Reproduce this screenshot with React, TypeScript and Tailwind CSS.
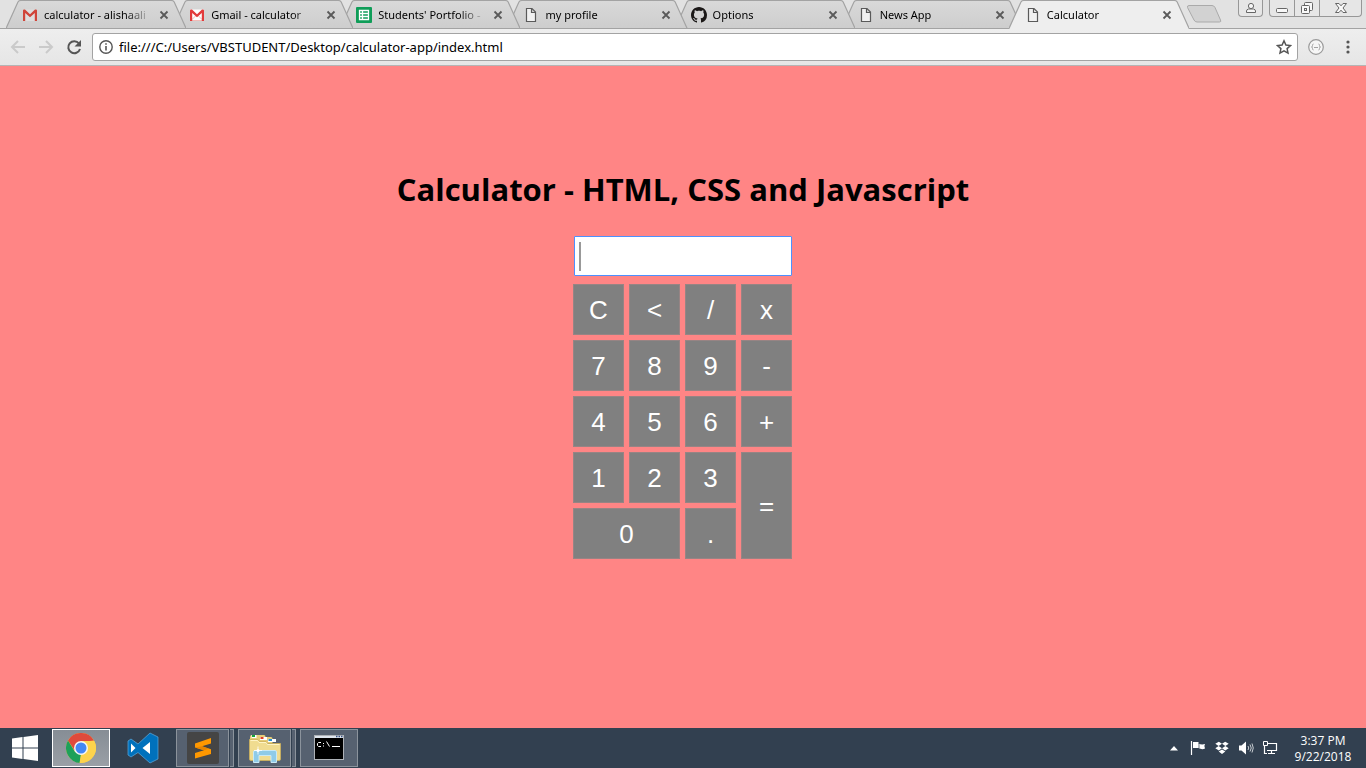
import { useState } from 'react';
import type { ReactNode } from 'react';

function GmailIcon({ soft = false }: { soft?: boolean }) {
  return (
    <svg width="16" height="16" viewBox="0 0 16 16">
      <rect x="1" y="2.500" width="14" height="11.500" fill={soft ? '#dedede' : '#fff'} />
      {!soft && <path d="M3 13.500h10M3 12.500l4-4M13 12.500l-4-4" fill="none" stroke="#eda9a4" strokeWidth=".8" />}
      <path d="M1 14V3.500q0-1 1-1h1L8 7.200l5-4.700h1q1 0 1 1V14h-2.200V6L8 10.300 3.200 6v8z" fill={soft ? '#d0453a' : '#e23b3b'} />
    </svg>
  );
}

function SheetIcon() {
  return (
    <svg width="16" height="16" viewBox="0 0 16 16">
      <rect width="16" height="16" rx="1" fill="#0f9d58" />
      <path d="M3.500 3.500h9v9h-9zM3 6.500h10M3 9.500h10M6.500 3v10" fill="none" stroke="#fff" strokeWidth="1.300" />
    </svg>
  );
}

function PageIcon() {
  return (
    <svg width="16" height="16" viewBox="0 0 16 16">
      <path d="M3.500 1.500H9L12.500 5v9.500h-9zM8.500 1.500V5.500h4" fill="#f1f1f1" stroke="#5a5a5a" strokeWidth="1.200" />
    </svg>
  );
}

function GithubIcon() {
  return (
    <svg width="16" height="16" viewBox="0 0 16 16" fill="#1b1817">
      <path d="M8 0C3.580 0 0 3.580 0 8c0 3.540 2.290 6.530 5.470 7.590.4.070.55-.17.55-.38 0-.19-.01-.82-.01-1.490-2.010.37-2.530-.49-2.690-.94-.09-.23-.48-.94-.82-1.130-.28-.15-.68-.52-.01-.53.63-.01 1.080.58 1.230.82.72 1.210 1.870.87 2.330.66.07-.52.28-.87.51-1.070-1.780-.2-3.640-.89-3.640-3.950 0-.87.31-1.590.82-2.150-.08-.2-.36-1.020.08-2.120 0 0 .67-.21 2.200.82.64-.18 1.320-.27 2-.27s1.360.09 2 .27c1.530-1.040 2.200-.82 2.200-.82.44 1.100.16 1.920.08 2.120.51.56.82 1.270.82 2.150 0 3.070-1.870 3.750-3.650 3.950.29.25.54.73.54 1.480 0 1.070-.01 1.930-.01 2.200 0 .21.15.46.55.38A8.010 8.010 0 0 0 16 8c0-4.420-3.580-8-8-8z" />
    </svg>
  );
}

type TabInfo = { title: string; icon: ReactNode; active?: boolean };

const tabs: TabInfo[] = [
  { title: 'calculator - alishaali', icon: <GmailIcon soft /> },
  { title: 'Gmail - calculator', icon: <GmailIcon /> },
  { title: "Students' Portfolio -", icon: <SheetIcon /> },
  { title: 'my profile', icon: <PageIcon /> },
  { title: 'Options', icon: <GithubIcon /> },
  { title: 'News App', icon: <PageIcon /> },
  { title: 'Calculator', icon: <PageIcon />, active: true },
];

const layers = ['z-[6]', 'z-[5]', 'z-[4]', 'z-[3]', 'z-[2]', 'z-[1]', 'z-[7]'];

function Tab({ tab, layer }: { tab: TabInfo; layer: string }) {
  return (
    <div className={`relative flex min-w-0 flex-1 items-center pl-4 pr-px pt-px ${layer}`}>
      <svg
        className="absolute top-0 left-0 h-[29px] w-[calc(100%+13px)]"
        viewBox="0 0 181 29"
        preserveAspectRatio="none"
      >
        <defs>
          <linearGradient id="tabFill" x1="0" y1="0" x2="0" y2="1">
            <stop offset="0" stopColor="#d9d9d9" />
            <stop offset="1" stopColor="#cdcdcd" />
          </linearGradient>
        </defs>
        <path d="M0 29L12 2Q13 .5 15 .5H166Q168 .5 169 2L181 29z" fill={tab.active ? '#eeeeee' : 'url(#tabFill)'} />
        <path
          d={tab.active ? 'M0 28.500L12 2Q13 .5 15 .5H166Q168 .5 169 2L181 28.500' : 'M0 28.500L12 2Q13 .5 15 .5H166Q168 .5 169 2L181 28.500z'}
          fill="none"
          stroke="#a3a3a3"
          strokeWidth="1.200"
        />
      </svg>
      <a href="#" className="relative flex min-w-0 flex-1 items-center gap-1.5 text-black">
        <span className="shrink-0">{tab.icon}</span>
        <span className="min-w-0 flex-1 whitespace-nowrap [mask-image:linear-gradient(to_right,black_75%,transparent)]">
          {tab.title}
        </span>
      </a>
      <button type="button" aria-label={`Close ${tab.title}`} className="relative ml-1 shrink-0">
        <svg width="16" height="16" viewBox="0 0 16 16">
          <path d="M4.500 4.500l7 7M11.500 4.500l-7 7" stroke="#5a5a5a" strokeWidth="1.800" />
        </svg>
      </button>
    </div>
  );
}

function WindowControls() {
  return (
    <div className="flex h-[17px] gap-[6px] pr-1">
      <button type="button" aria-label="Profile" className="flex w-[25px] items-center justify-center rounded-b border border-t-0 border-[#979797] bg-[#e6e6e6]">
        <svg width="12" height="12" viewBox="0 0 12 12" fill="#f6f6f6" stroke="#666" strokeWidth="1">
          <path d="M1.500 10.500V9Q1.500 7.500 3.500 7H8.500Q10.500 7.500 10.500 9v1.500z" />
          <circle cx="6" cy="4" r="2.600" />
        </svg>
      </button>
      <div className="flex w-[93px] rounded-b border border-t-0 border-[#979797] bg-[#e6e6e6]">
        <button type="button" aria-label="Minimize" className="flex w-[25px] items-center justify-center border-r border-[#979797]">
          <svg width="14" height="14" viewBox="0 0 14 14">
            <rect x="1.500" y="7.500" width="11" height="4" rx="1" fill="#f8f8f8" stroke="#666" />
          </svg>
        </button>
        <button type="button" aria-label="Restore" className="flex w-[25px] items-center justify-center border-r border-[#979797]">
          <svg width="14" height="14" viewBox="0 0 14 14" fill="#f8f8f8" stroke="#666">
            <rect x="4.500" y="1.500" width="8" height="8" rx="1" />
            <rect x="1.500" y="4.500" width="8" height="8" rx="1" />
            <rect x="4.500" y="7.500" width="2" height="2" />
          </svg>
        </button>
        <button type="button" aria-label="Close" className="flex flex-1 items-center justify-center">
          <svg width="14" height="12" viewBox="0 0 14 12">
            <path d="M1.500 1.500h3.500L7 3.800 9 1.500h3.500L9 6l3.500 4.500H9L7 8.200 5 10.500H1.500L5 6z" fill="#f8f8f8" stroke="#666" strokeWidth="1" />
          </svg>
        </button>
      </div>
    </div>
  );
}

function Toolbar() {
  return (
    <div className="flex h-[37px] items-center border-b border-[#b5b5b5] bg-gradient-to-b from-[#eeeeee] to-[#e6e6e6] px-[10px]">
      <button type="button" aria-label="Back">
        <svg width="16" height="16" viewBox="0 0 16 16" fill="none" stroke="#cacaca" strokeWidth="2">
          <path d="M15 8H2M8 2L2 8l6 6" />
        </svg>
      </button>
      <button type="button" aria-label="Forward" className="ml-3">
        <svg width="16" height="16" viewBox="0 0 16 16" fill="none" stroke="#cacaca" strokeWidth="2">
          <path d="M1 8h13M8 2l6 6-6 6" />
        </svg>
      </button>
      <button type="button" aria-label="Reload" className="ml-3">
        <svg width="16" height="16" viewBox="0 0 16 16">
          <path d="M13 4.500A6 6 0 1 0 14 10" fill="none" stroke="#555" strokeWidth="2" />
          <path d="M15 1v6.500H8.500z" fill="#555" />
        </svg>
      </button>
      <div className="ml-[10px] flex h-7 flex-1 items-center rounded-[3px] border border-[#a3a3a3] bg-white pl-[6px] pr-[5px]">
        <svg width="14" height="14" viewBox="0 0 14 14">
          <circle cx="7" cy="7" r="6.200" fill="none" stroke="#555" strokeWidth="1.400" />
          <path d="M7 6v4.500M7 3.200v1.600" stroke="#555" strokeWidth="1.600" />
        </svg>
        <input
          aria-label="Address"
          className="ml-[6px] min-w-0 flex-1 bg-transparent pt-px font-['Noto_Sans',sans-serif] text-[13px] text-black outline-none"
          defaultValue="file:///C:/Users/VBSTUDENT/Desktop/calculator-app/index.html"
        />
        <button type="button" aria-label="Bookmark">
          <svg width="16" height="16" viewBox="0 0 16 16">
            <path d="M8 1.800l1.900 4.200 4.600.5-3.400 3.100.9 4.500L8 11.800l-4 2.300.9-4.500L1.500 6.500 6.100 6z" fill="none" stroke="#555" strokeWidth="1.500" />
          </svg>
        </button>
      </div>
      <button type="button" aria-label="Extension" className="ml-[10px]">
        <svg width="16" height="16" viewBox="0 0 16 16" fill="none" stroke="#9a9a9a">
          <circle cx="8" cy="8" r="7.300" fill="#f6f6f6" strokeWidth="1.200" />
          <path d="M5.500 5Q4.500 5 4.500 6.500T3.500 8Q4.500 8 4.500 9.500T5.500 11M10.500 5Q11.500 5 11.500 6.500T12.500 8Q11.500 8 11.500 9.500T10.500 11M6 8.500h4" strokeWidth=".9" />
        </svg>
      </button>
      <button type="button" aria-label="Menu" className="ml-4">
        <svg width="16" height="16" viewBox="0 0 16 16" fill="#555">
          <circle cx="8" cy="3" r="1.600" />
          <circle cx="8" cy="8" r="1.600" />
          <circle cx="8" cy="13" r="1.600" />
        </svg>
      </button>
    </div>
  );
}

const keys = [
  { label: 'C' }, { label: '<' }, { label: '/' }, { label: 'x' },
  { label: '7' }, { label: '8' }, { label: '9' }, { label: '-' },
  { label: '4' }, { label: '5' }, { label: '6' }, { label: '+' },
  { label: '1' }, { label: '2' }, { label: '3' }, { label: '=', span: 'row-span-2' },
  { label: '0', span: 'col-span-2' }, { label: '.' },
];

function evaluate(expression: string): string {
  const tokens = expression.match(/\d*\.?\d+|[-+x/]/g) ?? [];
  const terms: number[] = [];
  let op = '+';
  for (const token of tokens) {
    if (/^[-+x/]$/.test(token)) {
      op = token;
      continue;
    }
    const n = Number(token);
    if (op === 'x') terms.push((terms.pop() ?? 0) * n);
    else if (op === '/') terms.push((terms.pop() ?? 0) / n);
    else terms.push(op === '-' ? -n : n);
  }
  return terms.length ? String(terms.reduce((a, b) => a + b, 0)) : '';
}

function Calculator() {
  const [value, setValue] = useState('');
  const press = (key: string) => {
    if (key === 'C') setValue('');
    else if (key === '<') setValue(value.slice(0, -1));
    else if (key === '=') setValue(evaluate(value));
    else setValue(value + key);
  };
  return (
    <main className="flex flex-1 flex-col items-center bg-[#ff8585] pt-[101px] pb-10">
      <h1 className="text-center text-[31px] leading-[44px] font-bold text-black">Calculator - HTML, CSS and Javascript</h1>
      <div className="mt-[25px] w-[220px] font-['Liberation_Sans',sans-serif] text-[26px]">
        <div className="relative ml-px w-[218px]">
          <input
            aria-label="Calculation"
            className="block h-10 w-full rounded-[1px] border border-[#4d90fe] bg-white px-1 text-black caret-transparent outline-none"
            value={value}
            onChange={(e) => setValue(e.target.value)}
          />
          {value === '' && <span className="absolute top-[6px] left-[5px] h-[29px] w-[2px] bg-[#999]" />}
        </div>
        <div className="mt-2 grid auto-rows-[51px] grid-cols-[repeat(4,51px)] gap-[5px]">
          {keys.map((key) => (
            <button
              key={key.label}
              type="button"
              onClick={() => press(key.label)}
              className={`border border-[#978484] bg-[#808080] leading-[30px] text-white ${key.span ?? ''}`}
            >
              {key.label}
            </button>
          ))}
        </div>
      </div>
    </main>
  );
}

function Taskbar() {
  const open = 'flex h-[38px] items-center justify-center border border-[#8b939c] bg-[#566170]';
  return (
    <footer className="flex h-10 shrink-0 items-center bg-[#324050] text-white">
      <button type="button" aria-label="Start" className="ml-3">
        <svg width="26" height="26" viewBox="0 0 26 26" fill="#fff">
          <path d="M0 3.500L10.500 2v10.500H0zM11.500 1.900L26 0v12.500H11.500zM0 13.500h10.500V24L0 22.500zM11.500 13.500H26V26l-14.500-1.900z" />
        </svg>
      </button>
      <button type="button" aria-label="Chrome" className="ml-[14px] flex h-[38px] w-[58px] items-center justify-center border border-white bg-gradient-to-b from-[#868d95] to-[#9a9fa6]">
        <svg width="30" height="30" viewBox="0 0 30 30">
          <circle cx="15" cy="15" r="15" fill="#fdd34c" />
          <path d="M2 7.500A15 15 0 0 1 28 7.500L15 9 9 18z" fill="#df4a3c" />
          <path d="M2 7.500L8.800 18.500 15 21.800 14 30A15 15 0 0 1 2 7.500z" fill="#1ea05a" />
          <path d="M28.200 8H15v13.500l-1.500 8.400A15 15 0 0 0 28.200 8z" fill="#fdd34c" />
          <circle cx="15" cy="15" r="7" fill="#f5f5f5" />
          <circle cx="15" cy="15" r="5.500" fill="#4387f5" />
        </svg>
      </button>
      <button type="button" aria-label="Visual Studio Code" className="ml-[17px]">
        <svg width="32" height="32" viewBox="0 0 32 32">
          <path d="M23 1l8 4v22l-8 4L11 20.500 4 25l-3-2V9l3-2 7 5z" fill="#0071bc" stroke="#5da9dc" strokeWidth=".7" />
          <path d="M23 10v12l-7.500-6zM4 11.500v9L8.500 16z" fill="#fff" />
        </svg>
      </button>
      <div className="ml-[17px] flex gap-px">
        <button type="button" aria-label="Sublime Text" className={`${open} w-[53px]`}>
          <svg width="32" height="32" viewBox="0 0 32 32">
            <rect width="32" height="32" rx="2" fill="#454545" />
            <path d="M8 11.500L24 6v5.500l-9 2.800 9 3V22L8 26.500V21l9-2.800-9-2.700z" fill="#ff9800" />
            <path d="M8 15.500l9 2.700 5-1.500-7-2.400z" fill="#e88600" />
          </svg>
        </button>
        <span className={`${open} w-1 border-l-0`} />
      </div>
      <div className="ml-1 flex gap-px">
        <button type="button" aria-label="File Explorer" className={`${open} w-[53px]`}>
          <svg width="34" height="32" viewBox="0 0 34 32">
            <path d="M2 5q0-2 2-2h12q1.500 0 1.500 2v3H2z" fill="#e6cd78" />
            <path d="M10 7q0-2 2-2h11q1.500 0 1.500 2v4H10z" fill="#e6cd78" />
            <path d="M3.500 3h5v3h-5zM12 5h7v3h-7zM20 7h8v3h-8z" fill="#fff" />
            <path d="M4 3h3v2H4z" fill="#13a538" />
            <path d="M12.500 5h3v2h-3z" fill="#df4126" />
            <path d="M20.500 7h3.500v2h-3.500z" fill="#288fd3" />
            <path d="M1.500 7.500H10l1.500 2H18l1.500 2H32.500V27q0 1.500-1.500 1.500H3q-1.500 0-1.500-1.500z" fill="#f0dc90" stroke="#cfb35a" strokeWidth=".8" />
            <path d="M2.500 8.500h7l1.500 2h7l1.500 2h12" fill="none" stroke="#fff6cc" strokeWidth=".9" />
            <path d="M5.500 30.500V20q0-1.500 1.500-1.500h20q1.500 0 1.500 1.500v10.500h-5.500V23.500h-12v7z" fill="#8fcbe8" stroke="#c8e9f6" />
            <path d="M10 14.500v8M6 18.500h8" stroke="#fff" strokeWidth=".8" />
            <circle cx="10" cy="18.500" r="1.500" fill="#fff" />
          </svg>
        </button>
        <span className={`${open} w-1 border-l-0`} />
      </div>
      <button type="button" aria-label="Command Prompt" className={`${open} ml-1 w-[58px]`}>
        <svg width="30" height="26" viewBox="0 0 30 26">
          <rect x=".5" y=".5" width="29" height="24" fill="#000" stroke="#aeb2b7" />
          <path d="M1 1h28v2H1z" fill="#dfe6ee" />
          <path d="M22 1.500h1.500M24.500 1.500H26M27 1.500h1.500" stroke="#344f82" strokeWidth="1.500" />
          <path d="M7 7.500H4.500L3.500 8.500v2l1 1H7M9.500 8v1M9.500 10.500v1M12.500 6.500l3 5M18 11.500h8" fill="none" stroke="#fff" />
        </svg>
      </button>

      <div className="ml-auto flex items-center">
        <button type="button" aria-label="Show hidden icons">
          <svg width="8" height="5" viewBox="0 0 8 5" fill="#fff"><path d="M4 0l4 4.500H0z" /></svg>
        </button>
        <svg className="ml-3" width="16" height="16" viewBox="0 0 16 16">
          <path d="M1.500 1v14" stroke="#fff" strokeWidth="1.200" />
          <path d="M3 2h5.500v1.500q3 1.500 6.500.5-1.500 2.500 0 4.500-3 1.500-6.500-.5H3z" fill="#fff" />
          <path d="M9 3v5" stroke="#324050" strokeWidth=".7" />
        </svg>
        <svg className="ml-[9px]" width="14" height="14" viewBox="0 0 14 14" fill="#fff">
          <path d="M3.800.8L7 2.800 3.600 5 .3 2.800zM10.200.8l3.500 2L10.400 5 7 2.800zM3.600 5L7 7.200 3.800 9.400.3 7.200zM10.400 5l3.300 2.200-3.500 2.200L7 7.200zM7 8.400l3.300 2.200L7 13 3.700 10.600z" />
        </svg>
        <svg className="ml-[9px]" width="16" height="16" viewBox="0 0 16 16">
          <path d="M1 5.500h2.500L8 1.500v13l-4.500-4H1z" fill="#fff" />
          <path d="M10 6q1.500 2 0 4M12 4.500q2.500 3.500 0 7M14 3.500q2.500 4.500 0 9" fill="none" stroke="#c9ced3" strokeWidth="1" />
        </svg>
        <svg className="ml-2" width="16" height="16" viewBox="0 0 16 16" fill="none" stroke="#fff">
          <path d="M6 3.500h8.500v7H5M9.500 11v2.500M6 13.500h7M2.500 6v7.500H5" strokeWidth="1.200" />
          <path d="M1.500 1.500h4v4h-4z" />
        </svg>
        <time className="ml-2 w-[74px] pt-0.5 text-center text-[12px] leading-4 mr-1.5" dateTime="2018-09-22T15:37">
          3:37 PM
          <br />
          9/22/2018
        </time>
      </div>
    </footer>
  );
}

export default function App() {
  return (
    <div className="flex min-h-screen flex-col font-['Open_Sans','Noto_Sans',sans-serif]">
      <header>
        <div className="relative flex h-[29px] border-b border-[#a3a3a3] bg-[#e2e2e2] pl-[6px] font-['Noto_Sans',sans-serif] text-[11px]">
          <nav aria-label="Tabs" className="isolate flex h-[29px] min-w-0 flex-1">
            {tabs.map((tab, i) => (
              <Tab key={tab.title} tab={tab} layer={layers[i]} />
            ))}
          </nav>
          <button type="button" aria-label="New tab" className="ml-[10px] self-center">
            <svg width="36" height="18" viewBox="0 0 36 18">
              <path d="M3 .5h23q2 0 3 2l5.500 12.500q1 2-1 2H11q-2 0-3-2L1.500 2.500Q1 .5 3 .5z" fill="#d2d2d2" stroke="#aaa" />
            </svg>
          </button>
          <div className="ml-4">
            <WindowControls />
          </div>
        </div>
        <Toolbar />
      </header>
      <Calculator />
      <Taskbar />
    </div>
  );
}
